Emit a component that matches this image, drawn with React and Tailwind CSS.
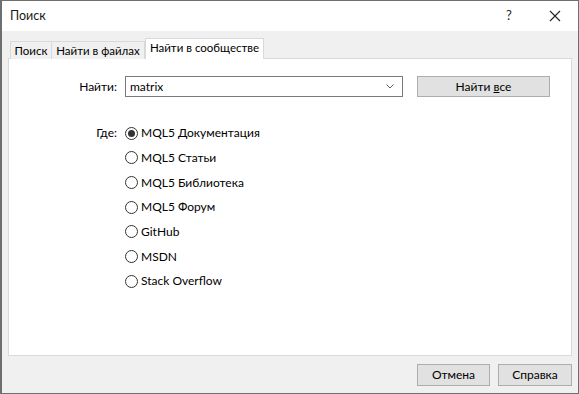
const sources = [
  "MQL5 Документация",
  "MQL5 Статьи",
  "MQL5 Библиотека",
  "MQL5 Форум",
  "GitHub",
  "MSDN",
  "Stack Overflow",
];

function Radio({ label, checked }) {
  return (
    <div className="flex items-center h-[24.67px]">
      <span className="w-[13px] h-[13px] rounded-full border border-[#333333] bg-white flex items-center justify-center shrink-0">
        {checked && <span className="w-[7px] h-[7px] rounded-full bg-[#333333]" />}
      </span>
      <span className="ml-[3px] text-[12px] text-black leading-none">{label}</span>
    </div>
  );
}

export default function App() {
  return (
    <div
      className="w-[579px] h-[394px] flex flex-col border border-[#6f6f6f] border-l-2 bg-[#f0f0f0] text-[12px] text-black"
      style={{ fontFamily: 'Lato, "Segoe UI", sans-serif' }}
    >
      {/* Title bar */}
      <div className="h-[30px] bg-white flex items-center shrink-0">
        <span className="pl-[8px] text-[12.5px] text-[#1a1a1a]">Поиск</span>
        <span className="ml-auto w-[14px] text-center text-[13px] text-[#222]">?</span>
        <span className="ml-[32px] mr-[16px] w-[14px] flex justify-center">
          <svg width="12" height="12" viewBox="0 0 12 12">
            <path d="M1 1L11 11M11 1L1 11" stroke="#222" strokeWidth="1.1" />
          </svg>
        </span>
      </div>

      {/* Body */}
      <div className="flex-1 flex flex-col px-[6px] pt-[7px]">
        {/* Tabs */}
        <div className="flex items-end h-[21px] pl-[2px] relative z-10 text-[11.5px]">
          <div className="h-[18px] w-[42px] flex items-center justify-center border border-b-0 border-[#d9d9d9] bg-[#f0f0f0]">
            Поиск
          </div>
          <div className="h-[18px] w-[93px] flex items-center justify-center border border-b-0 border-l-0 border-[#d9d9d9] bg-[#f0f0f0]">
            Найти в файлах
          </div>
          <div className="h-[21px] w-[119px] pb-[2px] flex items-center justify-center border border-b-0 border-[#d9d9d9] bg-white">
            Найти в сообществе
          </div>
        </div>

        {/* Panel */}
        <div className="-mt-px h-[298px] bg-white border border-[#d9d9d9] pt-[17px]">
          <div className="flex items-center h-[21px]">
            <div className="w-[109px] text-right pr-[1px]">Найти:</div>
            <div className="ml-[7px] w-[278px] h-[21px] border border-[#7a7a7a] flex items-center pl-[4px] pr-[8px]">
              <span className="flex-1">matrix</span>
              <svg width="8" height="5" viewBox="0 0 8 5">
                <path d="M0.5 0.5L4 4L7.5 0.5" stroke="#606060" fill="none" strokeWidth="1" />
              </svg>
            </div>
            <button className="ml-[14px] w-[133px] h-[21px] bg-[#e1e1e1] border border-[#adadad] text-[12px]">
              Найти <u>в</u>се
            </button>
          </div>

          <div className="flex mt-[24px]">
            <div className="w-[109px] text-right pr-[1px] h-[24.67px] flex items-center justify-end">Где:</div>
            <div className="ml-[7px] flex flex-col">
              {sources.map((s, i) => (
                <Radio key={s} label={s} checked={i === 0} />
              ))}
            </div>
          </div>
        </div>

        {/* Footer buttons */}
        <div className="flex justify-end gap-[8px] pt-[8px]">
          <button className="w-[73px] h-[22px] bg-[#e1e1e1] border border-[#adadad] text-[12px]">Отмена</button>
          <button className="w-[74px] h-[22px] bg-[#e1e1e1] border border-[#adadad] text-[12px]">Справка</button>
        </div>
      </div>
    </div>
  );
}
